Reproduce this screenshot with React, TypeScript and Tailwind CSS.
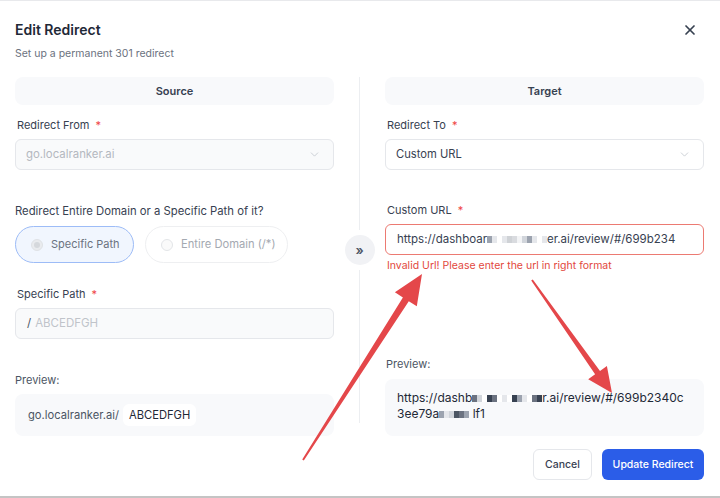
import { ChevronDown, X } from "lucide-react";

type Pt = [number, number];

// Tapered callout arrow: thin at the tail, widening towards a filled head.
function arrowPoints(tail: Pt, tip: Pt, head = 26, headW = 22, w0 = 2, w1 = 7) {
  const dx = tip[0] - tail[0];
  const dy = tip[1] - tail[1];
  const len = Math.hypot(dx, dy);
  const ux = dx / len;
  const uy = dy / len;
  const nx = -uy;
  const ny = ux;
  const bx = tip[0] - ux * head;
  const by = tip[1] - uy * head;
  const p = (x: number, y: number) => `${x.toFixed(1)},${y.toFixed(1)}`;
  return [
    p(tail[0] + (nx * w0) / 2, tail[1] + (ny * w0) / 2),
    p(bx + (nx * w1) / 2, by + (ny * w1) / 2),
    p(bx + (nx * headW) / 2, by + (ny * headW) / 2),
    p(tip[0], tip[1]),
    p(bx - (nx * headW) / 2, by - (ny * headW) / 2),
    p(bx - (nx * w1) / 2, by - (ny * w1) / 2),
    p(tail[0] - (nx * w0) / 2, tail[1] - (ny * w0) / 2),
  ].join(" ");
}

function Label({ text, className = "" }: { text: string; className?: string }) {
  return (
    <p className={`text-[11px] leading-4 text-[#374151] ${className}`}>
      {text}
      <span className="ml-1.5 text-[#ef4444]">*</span>
    </p>
  );
}

function Mosaic({ shades }: { shades: string[] }) {
  return (
    <span className="inline-flex items-center align-middle">
      {shades.map((c, i) => (
        <span key={i} className="inline-block h-[7px] w-[5px]" style={{ backgroundColor: c }} />
      ))}
    </span>
  );
}

function SectionHead({ title }: { title: string }) {
  return (
    <div className="flex h-7 items-center justify-center rounded-lg bg-[#f8f9fb] text-[11px] font-semibold text-[#374151]">
      {title}
    </div>
  );
}

export default function App() {
  return (
    <div
      className="relative h-[498px] w-[720px] overflow-hidden border-t border-b-2 border-t-[#e8e9ec] border-b-[#c4c4c4] bg-white"
      style={{ fontFamily: "Inter, 'Noto Sans', sans-serif" }}
    >
      <div className="flex items-start justify-between pl-[15px] pr-[22px] pt-[19px]">
        <div>
          <h2 className="text-[14px] font-semibold leading-5 text-[#1f2937]">Edit Redirect</h2>
          <p className="mt-[6px] text-[10.5px] leading-4 text-[#6b7280]">Set up a permanent 301 redirect</p>
        </div>
        <button type="button" className="mt-[2px] text-[#374151]">
          <X size={16} strokeWidth={2.6} />
        </button>
      </div>

      <div className="mt-[15px] grid grid-cols-[319px_51px_319px] pl-[15px]">
        {/* source column */}
        <div>
          <SectionHead title="Source" />
          <Label text="Redirect From" className="ml-[2px] mt-3" />
          <div className="mt-1.5 flex h-[31px] items-center justify-between rounded-md border border-[#e5e7eb] bg-[#f9fafb] pl-[10px] pr-3 text-[11.4px] text-[#b4b8bf]">
            go.localranker.ai
            <ChevronDown size={13} strokeWidth={1.5} className="text-[#c2c6cc]" />
          </div>

          <p className="mt-[33px] text-[11.3px] leading-4 text-[#374151]">
            Redirect Entire Domain or a Specific Path of it?
          </p>
          <div className="mt-[7px] flex gap-[11px]">
            <div className="flex h-[37px] w-[119px] items-center gap-2 rounded-full border-[1.5px] border-[#9dbcf7] bg-[#f1f6fe] pl-[15px]">
              <span className="flex h-3 w-3 items-center justify-center rounded-full border border-[#dfe2e6] bg-[#e9ebee]">
                <span className="h-1.5 w-1.5 rounded-full bg-[#d5d8dc]" />
              </span>
              <span className="text-[11px] text-[#6b7280]">Specific Path</span>
            </div>
            <div className="flex h-[37px] w-[143px] items-center gap-2 rounded-full border border-[#eeeff1] bg-white pl-[15px]">
              <span className="h-3 w-3 rounded-full border border-[#e3e5e8] bg-[#fafafa]" />
              <span className="text-[11.2px] text-[#a4a9b1]">Entire Domain (/*)</span>
            </div>
          </div>

          <Label text="Specific Path" className="ml-[2px] mt-[23px]" />
          <div className="mt-1.5 flex h-[31px] items-center rounded-md border border-[#e5e7eb] bg-[#f9fafb] pl-[11px] text-[11.5px]">
            <span className="text-[#4b5563]">/</span>
            <span className="ml-1 text-[#c0c4ca]">ABCEDFGH</span>
          </div>

          <p className="mt-[33px] text-[11px] leading-4 text-[#4b5563]">Preview:</p>
          <div className="mt-1.5 flex h-[42px] items-center rounded-lg bg-[#f8f9fb] pl-[13px] text-[11.2px]">
            <span className="text-[#4b5563]">go.localranker.ai/</span>
            <span className="ml-1 rounded-md bg-white px-1.5 py-[3px] text-[#1f2937]">ABCEDFGH</span>
          </div>
        </div>

        {/* divider with swap indicator */}
        <div className="flex flex-col items-center">
          <div className="h-[153px] w-px bg-[#eceef1]" />
          <div className="my-[5px] flex h-[30px] w-[30px] items-center justify-center rounded-full bg-[#f1f2f5] text-[13px] font-semibold leading-none text-[#4b5563]">
            »
          </div>
          <div className="h-[153px] w-px bg-[#eceef1]" />
        </div>

        {/* target column */}
        <div>
          <SectionHead title="Target" />
          <Label text="Redirect To" className="ml-[2px] mt-3" />
          <div className="mt-1.5 flex h-[31px] items-center justify-between rounded-md border border-[#e5e7eb] bg-white pl-[10px] pr-3 text-[11.2px] text-[#374151]">
            Custom URL
            <ChevronDown size={13} strokeWidth={1.5} className="text-[#c2c6cc]" />
          </div>

          <Label text="Custom URL" className="ml-[2px] mt-[32px]" />
          <div className="mt-1.5 flex h-[31px] items-center whitespace-nowrap rounded-md border border-[#ec7a72] bg-white pl-[11px] text-[11.5px] text-[#374151]">
            https://dashboar
            <Mosaic shades={["#9ca3af", "#e5e7eb", "#ffffff", "#e5e7eb", "#cfd2d6", "#d9dbdf", "#f3f4f6", "#d1d5db", "#9ca3af", "#e5e7eb", "#ffffff", "#e5e7eb"]} />
            er.ai/review/#/699b234
          </div>
          <p className="ml-[2px] mt-1 text-[10.5px] leading-[14px] text-[#e2483d]">
            Invalid Url! Please enter the url in right format
          </p>

          <p className="ml-[1px] mt-[83px] text-[11px] leading-4 text-[#4b5563]">Preview:</p>
          <div className="mt-[7px] h-[57px] rounded-lg bg-[#f8f9fb] pl-[12px] pt-[11px] text-[12px] leading-4 text-[#1f2937]">
            https://dashb
            <Mosaic shades={["#6b7280", "#d1d5db", "#ffffff", "#374151", "#6b7280", "#ffffff", "#e5e7eb", "#ffffff", "#374151", "#9ca3af", "#e5e7eb", "#ffffff", "#6b7280", "#374151"]} />
            r.ai/review/#/699b2340c
            <br />
            3ee79a
            <Mosaic shades={["#9ca3af", "#e5e7eb", "#d1d5db", "#4b5563", "#6b7280", "#9ca3af"]} />
            {" "}lf1
          </div>

          <div className="mt-[13px] flex justify-end gap-[10px]">
            <button
              type="button"
              className="h-[31px] w-[59px] rounded-md border border-[#e5e7eb] bg-white text-[10.5px] font-medium text-[#374151]"
            >
              Cancel
            </button>
            <button
              type="button"
              className="h-[31px] w-[102px] rounded-md bg-[#2b5de8] text-[10.5px] font-medium text-white"
            >
              Update Redirect
            </button>
          </div>
        </div>
      </div>

      {/* callout arrows */}
      <svg className="pointer-events-none absolute left-0 top-0" width={720} height={498}>
        <polygon points={arrowPoints([303, 459], [422, 273], 30, 26, 2, 7)} fill="#e4474a" />
        <polygon points={arrowPoints([532, 279], [612, 392], 25, 23, 2, 6)} fill="#e4474a" />
      </svg>
    </div>
  );
}
